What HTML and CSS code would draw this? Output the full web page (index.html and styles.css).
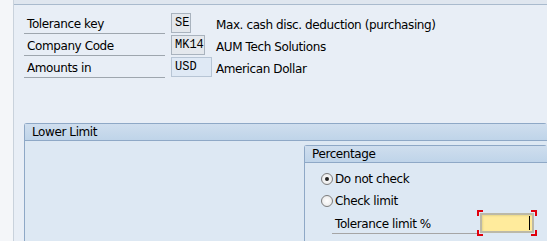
FILE: index.html
```html
<!DOCTYPE html>
<html lang="en">
<head>
  <meta charset="UTF-8" />
  <title>Tolerance key</title>
  <link rel="stylesheet" href="styles.css">
</head>
<body>
  <div class="page">
    <div class="sidebar"></div>
    <div class="main">
      <div class="topband"></div>

      <div class="header-fields">
        <div class="row">
          <span class="label">Tolerance key</span>
          <span class="field-cell"><span class="field ro w-se">SE</span></span>
          <span class="desc">Max. cash disc. deduction (purchasing)</span>
        </div>
        <div class="row">
          <span class="label">Company Code</span>
          <span class="field-cell"><span class="field ro w-cc">MK14</span></span>
          <span class="desc">AUM Tech Solutions</span>
        </div>
        <div class="row">
          <span class="label">Amounts in</span>
          <span class="field-cell"><span class="field out w-cur">USD</span></span>
          <span class="desc">American Dollar</span>
        </div>
      </div>

      <div class="group lower">
        <div class="group-title">Lower Limit</div>
        <div class="group-body">
          <div class="group sub">
            <div class="group-title">Percentage</div>
            <div class="sub-body">
              <div class="radio-row"><span class="radio checked"></span>Do not check</div>
              <div class="radio-row"><span class="radio"></span>Check limit</div>
              <div class="row">
                <span class="label sub-label">Tolerance limit %</span>
                <span class="input-focus"><span class="field edit"><span class="caret"></span></span></span>
              </div>
            </div>
          </div>
        </div>
      </div>
    </div>
  </div>
</body>
</html>
```

FILE: styles.css
```css
body {
  margin: 0;
  font-family: 'DejaVu Sans', Tahoma, sans-serif;
  font-size: 12px;
  letter-spacing: -0.4px;
  color: #000;
  background: #e8eef6;
  overflow: hidden;
}

.page {
  display: flex;
  height: 241px;
  overflow: hidden;
}

.sidebar {
  width: 13px;
  background: #f4f6f9;
  border-right: 1px solid #c9d2dc;
}

.main {
  flex: 1;
  min-width: 0;
  display: flex;
  flex-direction: column;
}

.topband {
  height: 4px;
  background: #dfe6ef;
  border-bottom: 1px solid #a9bacd;
}

.header-fields {
  margin: 7px 0 0 10px;
}

.row {
  display: flex;
  align-items: center;
  height: 22px;
}

.label {
  width: 138px;
  height: 21px;
  line-height: 25px;
  padding-left: 3px;
  border-bottom: 1px solid #9ea6ae;
  margin-right: 6px;
  white-space: nowrap;
}

.field-cell {
  width: 45px;
  display: flex;
}

.field {
  box-sizing: border-box;
  height: 20px;
  line-height: 19px;
  padding-left: 3px;
  font-family: 'Liberation Mono', 'DejaVu Sans Mono', monospace;
  font-size: 12px;
  letter-spacing: 0;
  border: 1px solid #a9b3be;
}

.ro {
  background: #e4e8ed;
}

.out {
  background: #dfe9f5;
  border-color: #b7c5d5;
}

.w-se { width: 20px; }
.w-cc { width: 34px; }
.w-cur { width: 41px; }

.desc {
  white-space: nowrap;
  padding-top: 3px;
}

.group {
  border: 1px solid #8ea8c6;
  border-radius: 3px 3px 0 0;
  background: #dde8f3;
  border-right: none;
  border-bottom: none;
}

.lower {
  margin: 45px 0 0 10px;
  flex: 1;
  display: flex;
  flex-direction: column;
}

.group-title {
  height: 16px;
  line-height: 17px;
  padding-left: 7px;
  background: linear-gradient(#cfdeee, #bfd4e9);
  border-bottom: 1px solid #8ea8c6;
}

.group-body {
  flex: 1;
  display: flex;
  padding: 4px 0 0 279px;
}

.sub {
  flex: 1;
}

.sub-body {
  padding: 5px 0 0 16px;
}

.radio-row {
  display: flex;
  align-items: center;
  height: 22px;
}

.radio {
  box-sizing: border-box;
  width: 12px;
  height: 12px;
  border: 1px solid #7c7c7c;
  border-radius: 50%;
  background: radial-gradient(#fff, #e4e4e4);
  margin-right: 2px;
  position: relative;
}

.radio.checked::after {
  content: "";
  position: absolute;
  left: 3px;
  top: 3px;
  width: 4px;
  height: 4px;
  border-radius: 50%;
  background: #222;
}

.sub-label {
  width: 142px;
  height: 20px;
  line-height: 22px;
  margin-left: 11px;
  margin-right: 0;
  border-bottom-color: #a5a5a5;
}

.input-focus {
  position: relative;
  padding: 3px;
}

.input-focus::before {
  content: "";
  position: absolute;
  inset: 0;
  border: 2px solid #e0000c;
  -webkit-mask:
    linear-gradient(#000 0 0) top left / 6px 6px no-repeat,
    linear-gradient(#000 0 0) top right / 6px 6px no-repeat,
    linear-gradient(#000 0 0) bottom left / 6px 6px no-repeat,
    linear-gradient(#000 0 0) bottom right / 6px 6px no-repeat;
}

.edit {
  display: block;
  width: 54px;
  height: 20px;
  background: #ffeb9c;
  border: 2px solid #bcb9a8;
  box-shadow: inset 1px 1px 2px #e6d58a;
  position: relative;
}

.caret {
  position: absolute;
  right: 2px;
  top: 1px;
  width: 1px;
  height: 14px;
  background: #000;
}
```
